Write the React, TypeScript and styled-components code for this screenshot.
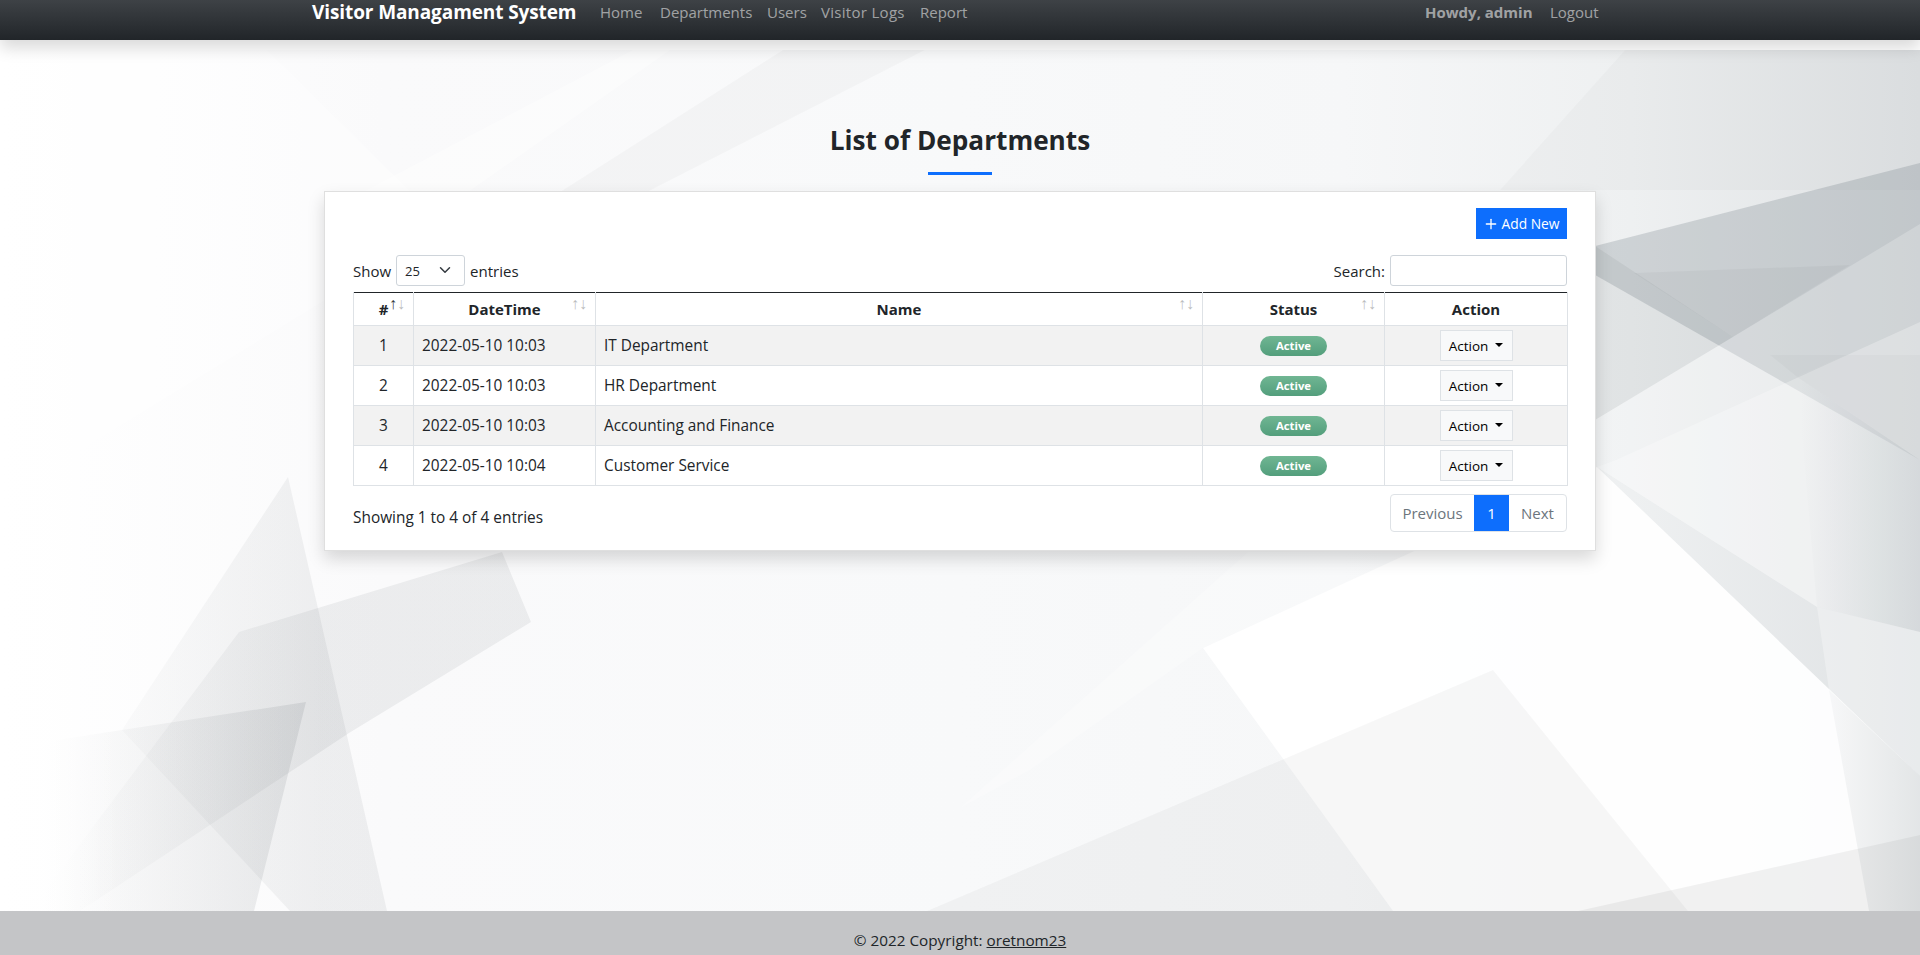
import styled, { createGlobalStyle } from 'styled-components';
import { Plus } from 'lucide-react';

const GlobalStyle = createGlobalStyle`
  html, body {
    margin: 0;
    height: 100%;
    overflow: hidden;
    background: #fff;
  }
  body {
    font-family: "Open Sans", "Liberation Sans", sans-serif;
    font-size: 15px;
    color: #212529;
  }
  * { box-sizing: border-box; }
`;

const Page = styled.div`
  height: 955px;
  display: flex;
  flex-direction: column;
`;

const Nav = styled.nav`
  position: relative;
  z-index: 2;
  flex: none;
  height: 40px;
  background: linear-gradient(180deg, #3e4246, #212529);
  box-shadow: 0 8px 16px rgba(0, 0, 0, 0.15);
`;

const NavInner = styled.div`
  width: 1320px;
  margin: 0 auto;
  padding: 0 20px 0 12px;
  display: flex;
  align-items: flex-start;
  justify-content: space-between;
`;

const NavLeft = styled.div`
  display: flex;
  align-items: flex-start;
`;

const Brand = styled.a`
  width: 288px;
  font-size: 19px;
  line-height: 25px;
  font-weight: 700;
  letter-spacing: -0.1px;
  color: #fff;
  white-space: nowrap;
`;

const NavLink = styled.a<{ $w: number; $bold?: boolean; $wide?: boolean }>`
  width: ${(p) => p.$w}px;
  font-size: 15px;
  letter-spacing: ${(p) => (p.$wide ? '0.3px' : '0')};
  line-height: 24px;
  font-weight: ${(p) => (p.$bold ? 700 : 400)};
  color: rgba(255, 255, 255, 0.55);
  white-space: nowrap;
`;

const NavRight = styled.div`
  display: flex;
  align-items: flex-start;
`;

const Main = styled.main`
  position: relative;
  flex: 1;
  padding-top: 10px;
`;

const Backdrop = styled.svg`
  position: absolute;
  left: 0;
  top: 10px;
  width: 1920px;
  height: 861px;
`;

const Content = styled.div`
  position: relative;
  width: 1272px;
  margin: 0 auto;
  display: flex;
  flex-direction: column;
`;

const Title = styled.h2`
  margin: 72px 0 0;
  font-size: 26.2px;
  line-height: 36px;
  font-weight: 700;
  text-align: center;
`;

const TitleRule = styled.div`
  width: 64px;
  height: 3px;
  margin: 14px auto 16px;
  background: #0d6efd;
`;

const Card = styled.section`
  height: 360px;
  padding: 16px 28px 0;
  background: #fff;
  border: 1px solid rgba(0, 0, 0, 0.125);
  box-shadow: 0 8px 16px rgba(0, 0, 0, 0.15);
`;

const CardTools = styled.div`
  display: flex;
  justify-content: flex-end;
  margin-bottom: 16px;
`;

const AddButton = styled.button`
  width: 91px;
  height: 31px;
  padding: 0;
  display: flex;
  align-items: center;
  justify-content: center;
  gap: 2px;
  border: 0;
  background: #0d6efd;
  color: #fff;
  font: inherit;
  font-size: 13.8px;
`;

const TableBar = styled.div`
  display: flex;
  align-items: center;
  justify-content: space-between;
  height: 31px;
  margin-bottom: 6px;
  font-size: 15px;
`;

const Label = styled.label`
  display: flex;
  align-items: center;
  gap: 5px;
`;

const SelectWrap = styled.span`
  position: relative;
  display: block;
  width: 69px;
  height: 31px;
`;

const EntriesSelect = styled.select`
  width: 100%;
  height: 100%;
  appearance: none;
  padding: 0 0 0 8px;
  border: 1px solid #ced4da;
  border-radius: 3px;
  background: #fff;
  color: #212529;
  font: inherit;
  font-size: 13px;
`;

const Chevron = styled.svg`
  position: absolute;
  right: 14px;
  top: 9px;
  width: 12px;
  height: 12px;
  pointer-events: none;
`;

const SearchInput = styled.input`
  width: 177px;
  height: 31px;
  border: 1px solid #ced4da;
  border-radius: 3px;
  background: #fff;
`;

const Table = styled.table`
  width: 1214px;
  table-layout: fixed;
  border-collapse: collapse;
  border-top: 1px solid #212529;
`;

const Head = styled.th`
  position: relative;
  height: 33px;
  padding: 0 8px;
  border: 1px solid #dee2e6;
  border-top: 0;
  text-align: center;
  font-size: 15px;
  font-weight: 700;
`;

const SortArrows = styled.span`
  position: absolute;
  right: 8px;
  top: 2px;
  display: flex;
  font-family: "Liberation Sans", sans-serif;
  font-size: 16px;
  font-weight: 400;
  line-height: 18px;
`;

const Arrow = styled.span<{ $on?: boolean }>`
  width: 8px;
  display: flex;
  justify-content: center;
  opacity: ${(p) => (p.$on ? 0.9 : 0.3)};
`;

const Row = styled.tr<{ $striped: boolean }>`
  height: 40px;
  background: ${(p) => (p.$striped ? '#f2f2f2' : '#fff')};
`;

const Cell = styled.td<{ $center?: boolean }>`
  padding: 0 8px;
  border: 1px solid #dee2e6;
  font-size: 15.4px;
  text-align: ${(p) => (p.$center ? 'center' : 'left')};
`;

const Badge = styled.span`
  display: inline-block;
  width: 67px;
  height: 20px;
  border-radius: 10px;
  background: linear-gradient(180deg, #70b693, #539e7c);
  color: #fff;
  font-size: 11.3px;
  font-weight: 700;
  line-height: 20px;
  text-align: center;
  vertical-align: middle;
`;

const ActionButton = styled.button`
  width: 73px;
  height: 31px;
  padding: 0;
  display: inline-flex;
  align-items: center;
  justify-content: center;
  gap: 7px;
  border: 1px solid #dee2e6;
  background: #f8f9fa;
  color: #000;
  font: inherit;
  font-size: 13.5px;
  vertical-align: middle;

  &::after {
    content: '';
    border-top: 4.5px solid #000;
    border-left: 4px solid transparent;
    border-right: 4px solid transparent;
    margin-top: -2px;
  }
`;

const TableFoot = styled.div`
  display: flex;
  align-items: flex-start;
  justify-content: space-between;
  margin-top: 8px;
  font-size: 15.4px;
  line-height: 24px;
`;

const ShowingText = styled.span`
  padding-top: 12px;
`;

const Pager = styled.div`
  display: flex;
  height: 38px;
  border: 1px solid #dee2e6;
  border-radius: 4px;
  overflow: hidden;
  background: #fff;
`;

const PageItem = styled.a<{ $w: number; $active?: boolean }>`
  width: ${(p) => p.$w}px;
  margin: ${(p) => (p.$active ? '-1px 0' : '0')};
  display: flex;
  align-items: center;
  justify-content: center;
  font-size: 15px;
  background: ${(p) => (p.$active ? '#0d6efd' : 'transparent')};
  color: ${(p) => (p.$active ? '#fff' : '#6c757d')};
`;

const Footer = styled.footer`
  flex: none;
  height: 44px;
  padding-top: 17px;
  background: #c4c5c7;
  text-align: center;
  font-size: 15.3px;
  line-height: 24px;
  position: relative;
  z-index: 1;
`;

const FooterLink = styled.a`
  color: #212529;
  text-decoration: underline;
`;

// backdrop pieces: points are page x, y-50
type Shape = { pts: string; fill: string; op: number };

const shapes: Shape[] = [
  // top left
  { pts: '0,0 267,0 411,142 325,250 0,450', fill: '#fff', op: 0.35 },
  { pts: '783,0 925,0 647,142 560,142', fill: '#000', op: 0.025 },
  { pts: '633,0 670,0 468,142 363,142', fill: '#fff', op: 0.4 },
  { pts: '1625,0 1920,0 1920,140 1500,140', fill: '#000', op: 0.02 },
  // right side, above the white sheet
  { pts: '1500,196 1595,196 1733,287 1595,370 1500,370', fill: '#5a6268', op: 0.09 },
  { pts: '1560,205 1920,113 1920,410', fill: '#5a6a72', op: 0.22 },
  { pts: '1634,223 1850,215 1733,287', fill: '#000', op: 0.03 },
  { pts: '1595,370 1920,174 1920,582 1817,557 1597,417', fill: '#fff', op: 0.22 },
  { pts: '1616,410 1920,272 1920,582 1817,557 1597,417', fill: '#fff', op: 0.28 },
  { pts: '1770,305 1847,305 1797,327', fill: '#000', op: 0.02 },
  { pts: '1847,305 1920,305 1920,410 1797,327', fill: '#000', op: 0.02 },
  { pts: '1797,327 1920,410 1920,582 1817,557', fill: 'url(#rightShade)', op: 1 },
  { pts: '1817,557 1920,582 1920,726 1829,640', fill: '#fff', op: 0.3 },
  // white sheet lower right
  { pts: '1203,598 1597,417 1920,726 1920,861 1393,861', fill: '#fff', op: 0.92 },
  { pts: '1248,502 1419,500 1203,598 1030,720 960,758', fill: '#fff', op: 0.25 },
  { pts: '927,861 1493,620 1688,861', fill: '#000', op: 0.03 },
  { pts: '1578,861 1920,785 1920,861', fill: '#000', op: 0.05 },
  { pts: '1829,640 1920,726 1920,861 1869,861', fill: 'url(#rightShade)', op: 1 },
  // lower left shards
  { pts: '288,427 387,861 290,861 122,680', fill: 'url(#leftShade)', op: 0.6 },
  { pts: '502,502 531,572 349,683 80,861 30,861 239,582', fill: 'url(#leftShade)', op: 0.65 },
  { pts: '306,652 254,861 20,861 24,695', fill: 'url(#leftShade)', op: 1 },
];

const rows = [
  { id: 1, date: '2022-05-10 10:03', name: 'IT Department' },
  { id: 2, date: '2022-05-10 10:03', name: 'HR Department' },
  { id: 3, date: '2022-05-10 10:03', name: 'Accounting and Finance' },
  { id: 4, date: '2022-05-10 10:04', name: 'Customer Service' },
];

const columns = [
  { label: '#', width: 60, sort: 'asc' },
  { label: 'DateTime', width: 182, sort: 'none' },
  { label: 'Name', width: 607, sort: 'none' },
  { label: 'Status', width: 182, sort: 'none' },
  { label: 'Action', width: 183, sort: '' },
];

export default function App() {
  return (
    <Page>
      <GlobalStyle />
      <Nav>
        <NavInner>
          <NavLeft>
            <Brand>Visitor Managament System</Brand>
            <NavLink $w={60}>Home</NavLink>
            <NavLink $w={107}>Departments</NavLink>
            <NavLink $w={54}>Users</NavLink>
            <NavLink $w={99} $wide>Visitor Logs</NavLink>
            <NavLink $w={60}>Report</NavLink>
          </NavLeft>
          <NavRight>
            <NavLink $w={125} $bold>Howdy, admin</NavLink>
            <NavLink $w={50}>Logout</NavLink>
          </NavRight>
        </NavInner>
      </Nav>
      <Main>
        <Backdrop viewBox="0 0 1920 861" preserveAspectRatio="none">
          <defs>
            <linearGradient id="base" x1="0" x2="1" y1="0" y2="0">
              <stop offset="0" stopColor="#ffffff" />
              <stop offset="0.2" stopColor="#fafafb" />
              <stop offset="0.5" stopColor="#f8f9fa" />
              <stop offset="0.7" stopColor="#f6f7f8" />
              <stop offset="0.85" stopColor="#eef0f1" />
              <stop offset="1" stopColor="#dfe2e4" />
            </linearGradient>
            <linearGradient id="fade" x1="0" x2="1" y1="0" y2="0">
              <stop offset="0" stopColor="#fff" stopOpacity="1" />
              <stop offset="1" stopColor="#fff" stopOpacity="0" />
            </linearGradient>
            <linearGradient id="leftShade" gradientUnits="userSpaceOnUse" x1="40" x2="320" y1="0" y2="0">
              <stop offset="0" stopColor="#5a6268" stopOpacity="0" />
              <stop offset="1" stopColor="#5a6268" stopOpacity="0.14" />
            </linearGradient>
            <linearGradient id="rightShade" gradientUnits="userSpaceOnUse" x1="1800" x2="1920" y1="0" y2="0">
              <stop offset="0" stopColor="#5a6a72" stopOpacity="0" />
              <stop offset="1" stopColor="#5a6a72" stopOpacity="0.16" />
            </linearGradient>
          </defs>
          <rect width="1920" height="861" fill="url(#base)" />
          {shapes.map((s) => (
            <polygon key={s.pts} points={s.pts} fill={s.fill} fillOpacity={s.op} />
          ))}
          <rect width="120" height="861" fill="url(#fade)" />
        </Backdrop>
        <Content>
          <Title>List of Departments</Title>
          <TitleRule />
          <Card>
            <CardTools>
              <AddButton>
                <Plus size={16} strokeWidth={2} />
                Add New
              </AddButton>
            </CardTools>
            <TableBar>
              <Label>
                Show
                <SelectWrap>
                  <EntriesSelect defaultValue="25">
                    <option>10</option>
                    <option>25</option>
                    <option>50</option>
                    <option>100</option>
                  </EntriesSelect>
                  <Chevron viewBox="0 0 16 16">
                    <path d="M2 5l6 6 6-6" fill="none" stroke="#343a40" strokeWidth="2" strokeLinecap="round" strokeLinejoin="round" />
                  </Chevron>
                </SelectWrap>
                entries
              </Label>
              <Label>
                Search:
                <SearchInput />
              </Label>
            </TableBar>
            <Table>
              <colgroup>
                {columns.map((c) => (
                  <col key={c.label} width={c.width} />
                ))}
              </colgroup>
              <thead>
                <tr>
                  {columns.map((c) => (
                    <Head key={c.label}>
                      {c.label}
                      {c.sort && (
                        <SortArrows>
                          <Arrow $on={c.sort === 'asc'}>↑</Arrow>
                          <Arrow>↓</Arrow>
                        </SortArrows>
                      )}
                    </Head>
                  ))}
                </tr>
              </thead>
              <tbody>
                {rows.map((r, i) => (
                  <Row key={r.id} $striped={i % 2 === 0}>
                    <Cell $center>{r.id}</Cell>
                    <Cell>{r.date}</Cell>
                    <Cell>{r.name}</Cell>
                    <Cell $center>
                      <Badge>Active</Badge>
                    </Cell>
                    <Cell $center>
                      <ActionButton>Action</ActionButton>
                    </Cell>
                  </Row>
                ))}
              </tbody>
            </Table>
            <TableFoot>
              <ShowingText>Showing 1 to 4 of 4 entries</ShowingText>
              <Pager>
                <PageItem $w={83}>Previous</PageItem>
                <PageItem $w={35} $active>1</PageItem>
                <PageItem $w={57}>Next</PageItem>
              </Pager>
            </TableFoot>
          </Card>
        </Content>
      </Main>
      <Footer>
        © 2022 Copyright: <FooterLink>oretnom23</FooterLink>
      </Footer>
    </Page>
  );
}
